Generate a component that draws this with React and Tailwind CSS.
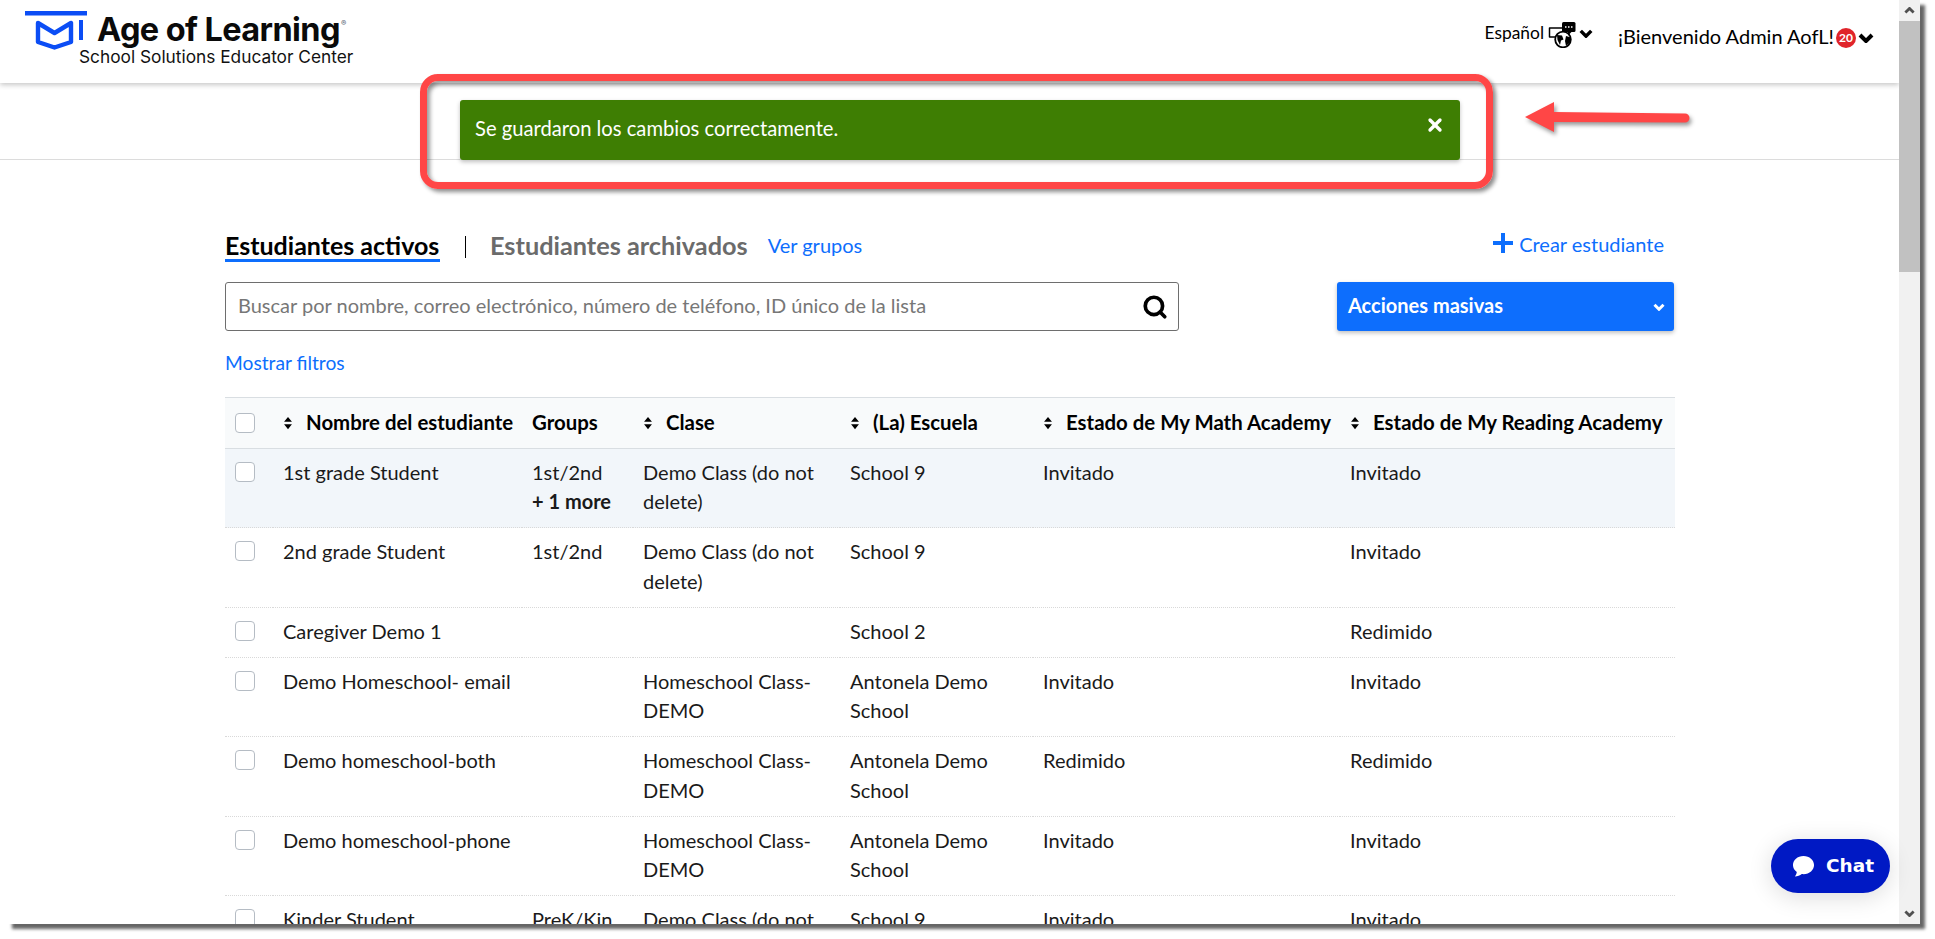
import React from "react";
import { Search, X } from "lucide-react";

const students = [
  { name: "1st grade Student", group: "1st/2nd", more: "+ 1 more", cls: "Demo Class (do not delete)", school: "School 9", math: "Invitado", reading: "Invitado" },
  { name: "2nd grade Student", group: "1st/2nd", cls: "Demo Class (do not delete)", school: "School 9", math: "", reading: "Invitado" },
  { name: "Caregiver Demo 1", group: "", cls: "", school: "School 2", math: "", reading: "Redimido" },
  { name: "Demo Homeschool- email", group: "", cls: "Homeschool Class- DEMO", school: "Antonela Demo School", math: "Invitado", reading: "Invitado" },
  { name: "Demo homeschool-both", group: "", cls: "Homeschool Class- DEMO", school: "Antonela Demo School", math: "Redimido", reading: "Redimido" },
  { name: "Demo homeschool-phone", group: "", cls: "Homeschool Class- DEMO", school: "Antonela Demo School", math: "Invitado", reading: "Invitado" },
  { name: "Kinder Student", group: "PreK/Kin", cls: "Demo Class (do not delete)", school: "School 9", math: "Invitado", reading: "Invitado" },
];

const Chevron = ({ className }) => (
  <svg viewBox="0 0 16 10" className={className} fill="none" stroke="currentColor" strokeWidth="4">
    <path d="M2 2l6 6 6-6" />
  </svg>
);

const Sort = () => (
  <svg viewBox="0 0 10 16" className="w-[10px] h-[14px] shrink-0 text-black" fill="currentColor">
    <path d="M5 1l4.500 5.500H.5zM5 15l4.500-5.500H.5z" />
  </svg>
);

const Checkbox = () => (
  <span className="block w-[20px] h-[20px] rounded-[4px] border border-[#b5bcc4] bg-white" />
);

const Logo = () => (
  <svg viewBox="0 0 62 40" className="w-[62px] h-[40px] shrink-0">
    <rect x="0" y="0" width="62" height="4.500" fill="#0b4df5" />
    <path d="M13 12L29.500 22 46 12V31L29.500 36.500 13 31z" fill="none" stroke="#0b4df5" strokeWidth="4.400" strokeLinejoin="round" />
    <path d="M54 9h4v20h-4z" fill="#0b4df5" />
  </svg>
);

const LangIcon = () => (
  <svg viewBox="0 0 28 27" className="w-[28px] h-[27px] shrink-0">
    <path d="M1.500 7h14v9h-3l-3 3v-3H1.500z" fill="#fff" stroke="#000" strokeWidth="1.500" strokeLinejoin="round" />
    <circle cx="15" cy="18.500" r="7.800" fill="#fff" stroke="#000" strokeWidth="1.800" />
    <path d="M9 14l5 .5 1.500 4-2.500 1-1 4.500-2.500-5zM18 15l5 1.500-1 5-4 3.500-1-5z" fill="#000" />
    <rect x="14" y="1" width="13.500" height="10" rx="1.500" fill="#000" />
    <path d="M20 11v3.500l3.500-3.500z" fill="#000" />
    <path d="M17 6h1.500M20 6h1.500M23 6h1.500" stroke="#fff" strokeWidth="1.300" />
  </svg>
);

const Header = () => (
  <header className="h-[83px] shrink-0 flex justify-between bg-white shadow-[0_2px_5px_rgba(0,0,0,0.22)] relative z-10">
    <div className="flex pl-[25px] pt-[11px]">
      <Logo />
      <div className="ml-[-8px]">
        <div className="flex pl-[18px] h-[38px] items-center text-[32.500px] font-bold tracking-[-0.6px] text-[#0a0a0a] font-['Inter',sans-serif]">
          Age of Learning<span className="text-[8px] text-gray-500 self-start mt-[6px] ml-[1px]">®</span>
        </div>
        <div className="mt-[-2px] text-[17.300px] leading-[20px] text-[#111] font-['Inter',sans-serif] whitespace-nowrap">School Solutions Educator Center</div>
      </div>
    </div>
    <div className="flex pr-[25px] pt-[21px] text-black">
      <span className="text-[17.400px] leading-[24px] mr-[4px]">Español</span>
      <LangIcon />
      <Chevron className="w-[14px] h-[9px] ml-[3px] mt-[8px]" />
      <span className="text-[20px] leading-[30px] ml-[25px]">¡Bienvenido Admin AofL!</span>
      <span className="w-[20px] h-[20px] rounded-full bg-[#e0242a] text-white text-[12px] font-bold flex items-center justify-center ml-[2px] mt-[7px]">20</span>
      <Chevron className="w-[16px] h-[10px] ml-[2px] mt-[12px]" />
    </div>
  </header>
);

const Alert = () => (
  <div className="h-[77px] shrink-0 border-b border-[#dcdcdc]">
    <div className="ml-[460px] mt-[17px] w-[1000px] h-[60px] rounded-[3px] bg-[#3e7e03] shadow-[0_2px_4px_rgba(0,0,0,0.25)] text-white text-[20.200px] flex items-center justify-between pl-[15px] pr-[15px] pb-[3px] relative">
      Se guardaron los cambios correctamente.
      <X className="w-[20px] h-[20px] mb-[7px]" strokeWidth={4} />
    </div>
  </div>
);

const Tabs = () => (
  <div className="flex items-start justify-between h-[26px] w-[1449px]">
    <div className="flex items-start">
      <span className="text-[25px] leading-[19px] font-bold text-black border-b-[3px] border-[#0d6efd] h-[26px] w-[215px] whitespace-nowrap">Estudiantes activos</span>
      <span className="ml-[25px] w-px h-[22px] bg-black" />
      <span className="ml-[24px] text-[25.300px] leading-[19px] font-bold text-[#6b6b6b] whitespace-nowrap">Estudiantes archivados</span>
      <a className="ml-[20px] text-[#0d6efd] text-[20px] leading-[19px] whitespace-nowrap">Ver grupos</a>
    </div>
    <a className="flex items-start text-[#0d6efd] text-[20px] leading-[20px] mr-[10px] whitespace-nowrap mt-[-3px]">
      <svg viewBox="0 0 20 20" className="w-[20px] h-[20px] mr-[6px]" fill="currentColor"><path d="M8 0h4v8h8v4h-8v8H8v-8H0V8h8z" /></svg>
      <span className="leading-[22px]">Crear estudiante</span>
    </a>
  </div>
);

const Th = ({ children, sort }) => (
  <th className="pl-[10px] text-left font-bold text-black align-middle whitespace-nowrap text-[20.400px]">
    <span className="flex items-center gap-[13px]">
      {sort && <Sort />}
      {children}
    </span>
  </th>
);

const Table = () => (
  <table className="mt-[21px] w-[1450px] table-fixed border-collapse text-[20px] leading-[29.200px] text-[#1a1a1a]">
    <colgroup>
      <col className="w-[48px]" />
      <col className="w-[249px]" />
      <col className="w-[111px]" />
      <col className="w-[207px]" />
      <col className="w-[193px]" />
      <col className="w-[307px]" />
      <col className="w-[335px]" />
    </colgroup>
    <thead>
      <tr className="h-[51px] bg-[#f8fafb] border-y border-[#d9dee2]">
        <th className="pl-[10px]"><Checkbox /></th>
        <Th sort>Nombre del estudiante</Th>
        <Th>Groups</Th>
        <Th sort>Clase</Th>
        <Th sort>(La) Escuela</Th>
        <Th sort>Estado de My Math Academy</Th>
        <Th sort>Estado de My Reading Academy</Th>
      </tr>
    </thead>
    <tbody>
      {students.map((s, i) => (
        <tr key={i} className={i === 0 ? "bg-[#f2f6fa] border-b border-dotted border-[#d9d9d9]" : "border-b border-dotted border-[#d9d9d9]"}>
          <td className="pl-[10px] pt-[9px] pb-[11px] align-top"><span className="block mt-[4px]"><Checkbox /></span></td>
          <td className="pl-[10px] pt-[9px] pb-[11px] align-top">{s.name}</td>
          <td className="pl-[10px] pt-[9px] pb-[11px] align-top">
            {s.group}
            {s.more && <div className="font-bold">{s.more}</div>}
          </td>
          <td className="pl-[10px] pt-[9px] pb-[11px] align-top">{s.cls}</td>
          <td className="pl-[10px] pt-[9px] pb-[11px] align-top">{s.school}</td>
          <td className="pl-[10px] pt-[9px] pb-[11px] align-top">{s.math}</td>
          <td className="pl-[10px] pt-[9px] pb-[11px] align-top">{s.reading}</td>
        </tr>
      ))}
    </tbody>
  </table>
);

const Scrollbar = () => (
  <div className="w-[21px] shrink-0 bg-[#f1f1f1] flex flex-col items-center relative z-20">
    <div className="h-[21px] flex items-center justify-center text-[#505050]">
      <Chevron className="w-[11px] h-[7px] rotate-180" />
    </div>
    <div className="w-full h-[251px] bg-[#c1c1c1]" />
    <div className="mt-auto h-[21px] flex items-center justify-center text-[#505050]">
      <Chevron className="w-[11px] h-[7px]" />
    </div>
  </div>
);

// red markup drawn on top of the screenshot
const Annotation = () => (
  <>
    <div className="absolute left-[420px] top-[74px] w-[1073px] h-[115px] rounded-[18px] border-[7px] border-[#ff4646] shadow-[3px_3px_4px_rgba(0,0,0,0.45),inset_3px_3px_4px_rgba(0,0,0,0.4)] z-30" />
    <svg className="absolute left-[1520px] top-[96px] w-[180px] h-[46px] z-30 drop-shadow-[2px_3px_2px_rgba(0,0,0,0.4)]" viewBox="0 0 180 46">
      <path d="M5 21L34 6v10l131 1.500a4.500 4.500 0 010 9L34 26v10z" fill="#ff4646" />
    </svg>
  </>
);

export default function App() {
  return (
    <div className="relative w-[1935px] h-[939px] overflow-hidden bg-white font-['Lato',sans-serif]">
      <div className="ml-[7px] w-[1913px] h-[924px] flex bg-white shadow-[5px_5px_3px_rgba(0,0,0,0.6)]">
        <main className="flex-1 flex flex-col overflow-hidden ml-[-7px] min-w-0">
          <Header />
          <Alert />
          <section className="pl-[225px] pt-[76px]">
            <Tabs />
            <div className="flex justify-between mt-[20px] w-[1449px]">
              <div className="w-[954px] h-[49px] rounded-[3px] border border-[#6e6e6e] flex items-center justify-between pl-[12px] pr-[10px] text-[20px] text-[#777]">
                <span className="pb-[3px]">Buscar por nombre, correo electrónico, número de teléfono, ID único de la lista</span>
                <Search className="w-[26px] h-[26px] text-black" strokeWidth={3.4} />
              </div>
              <div className="w-[337px] h-[49px] rounded-[3px] bg-[#0d6efd] text-white text-[20px] font-bold flex items-center justify-between pl-[11px] pr-[9px] pb-[3px] shadow-[0_2px_4px_rgba(0,0,0,0.25)]">
                Acciones masivas
                <Chevron className="w-[12px] h-[8px] mt-[3px]" />
              </div>
            </div>
            <a className="block mt-[19px] text-[#0d6efd] text-[19.200px] leading-[26px]">Mostrar filtros</a>
            <Table />
          </section>
        </main>
        <Scrollbar />
      </div>
      <Annotation />
      <button className="absolute left-[1771px] top-[839px] w-[119px] h-[54px] rounded-full bg-[#0019c4] text-white text-[18.500px] font-bold flex items-center pl-[21px] gap-[11px] shadow-[0_4px_24px_rgba(0,0,0,0.14)] z-20 font-['DejaVu_Sans',sans-serif]">
        <svg viewBox="0 0 24 24" className="w-[23px] h-[23px]" fill="currentColor">
          <path d="M12 1C5.700 1 1 5.200 1 10.500c0 3 1.500 5.500 4 7.200-.2 1.700-1 3.400-2 4.800 2.800-.2 5.300-1.200 7.200-2.600.6.100 1.200.100 1.800.100 6.300 0 11-4.200 11-9.500S18.300 1 12 1z" />
        </svg>
        Chat
      </button>
    </div>
  );
}
